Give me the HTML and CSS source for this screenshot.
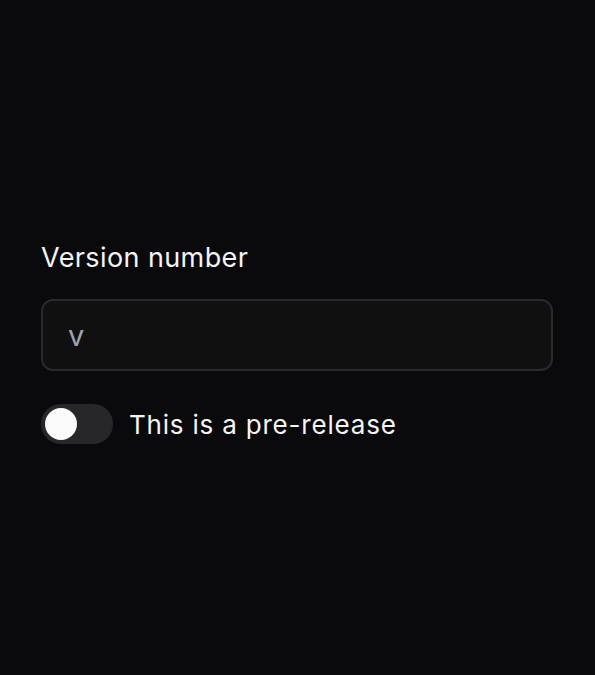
FILE: index.html
```html
<!DOCTYPE html>
<html lang="en">
<head>
    <meta charset="UTF-8">
    <meta name="viewport" content="width=device-width, initial-scale=1.0">
    <title>Release</title>
    <link rel="stylesheet" href="styles.css">
</head>
<body>
    <form class="release-form">
        <label class="field">
            <span class="field-label">Version number</span>
            <input class="field-input" type="text" placeholder="v">
        </label>
        <label class="switch-row">
            <input class="switch-input" type="checkbox">
            <span class="switch"><span class="switch-thumb"></span></span>
            <span class="switch-label">This is a pre-release</span>
        </label>
    </form>
</body>
</html>
```

FILE: styles.css
```css
html, body {
    margin: 0;
    height: 100%;
}

body {
    background-color: #0a0a0c;
    color: #f4f4f5;
    font-family: Inter, "Noto Sans", sans-serif;
    display: flex;
    align-items: center;
    padding: 0 42px 0 41px;
    box-sizing: border-box;
}

.release-form {
    width: 100%;
    display: flex;
    flex-direction: column;
    gap: 32px;
    margin-top: 12px;
}

.field {
    display: flex;
    flex-direction: column;
    gap: 25px;
}

.field-label {
    font-size: 27px;
    line-height: 32px;
    letter-spacing: 0.4px;
}

.field-input {
    height: 72px;
    box-sizing: border-box;
    border: 2px solid #2a2a2e;
    border-radius: 12px;
    background-color: #101010;
    color: #f4f4f5;
    font-family: inherit;
    font-size: 29px;
    padding: 0 25px;
    outline: none;
}

.field-input::placeholder {
    color: #a1a1aa;
}

.switch-row {
    display: flex;
    align-items: center;
    gap: 16px;
}

.switch-input {
    display: none;
}

.switch {
    width: 72px;
    height: 40px;
    border-radius: 20px;
    background-color: #27272a;
    display: flex;
    align-items: center;
    padding: 4px;
    box-sizing: border-box;
}

.switch-thumb {
    width: 32px;
    height: 32px;
    border-radius: 50%;
    background-color: #fafafa;
}

.switch-label {
    font-size: 26px;
    line-height: 40px;
    letter-spacing: 0.8px;
    padding-top: 2px;
}
```
